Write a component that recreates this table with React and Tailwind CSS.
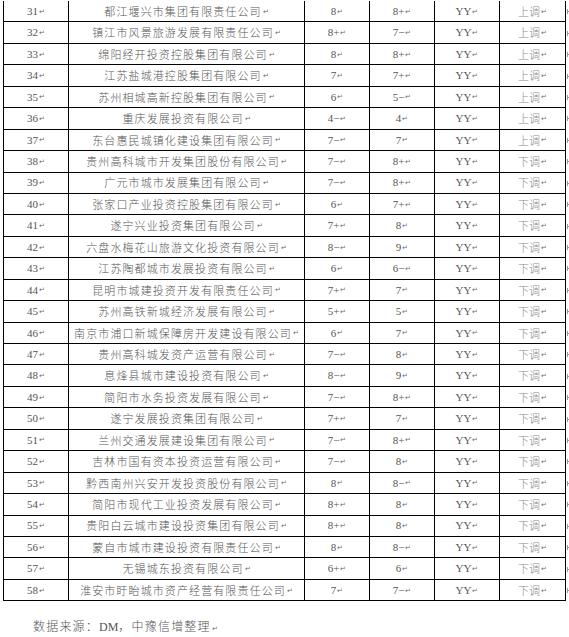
import React from "react";

const rows = [
  ["31", "都江堰兴市集团有限责任公司", "8", "8+", "上调"],
  ["32", "镇江市风景旅游发展有限责任公司", "8+", "7−", "上调"],
  ["33", "绵阳经开投资控股集团有限公司", "8", "8+", "上调"],
  ["34", "江苏盐城港控股集团有限公司", "7", "7+", "上调"],
  ["35", "苏州相城高新控股集团有限公司", "6", "5−", "上调"],
  ["36", "重庆发展投资有限公司", "4−", "4", "上调"],
  ["37", "东台惠民城镇化建设集团有限公司", "7−", "7", "上调"],
  ["38", "贵州高科城市开发集团股份有限公司", "7−", "8+", "下调"],
  ["39", "广元市城市发展集团有限公司", "7−", "8+", "下调"],
  ["40", "张家口产业投资控股集团有限公司", "6", "7+", "下调"],
  ["41", "遂宁兴业投资集团有限公司", "7+", "8", "下调"],
  ["42", "六盘水梅花山旅游文化投资有限公司", "8−", "9", "下调"],
  ["43", "江苏陶都城市发展投资有限公司", "6", "6−", "下调"],
  ["44", "昆明市城建投资开发有限责任公司", "7+", "7", "下调"],
  ["45", "苏州高铁新城经济发展有限公司", "5+", "5", "下调"],
  ["46", "南京市浦口新城保障房开发建设有限公司", "6", "7", "下调"],
  ["47", "贵州高科城发资产运营有限公司", "7−", "8", "下调"],
  ["48", "息烽县城市建设投资有限公司", "8−", "9", "下调"],
  ["49", "简阳市水务投资发展有限公司", "7−", "8+", "下调"],
  ["50", "遂宁发展投资集团有限公司", "7+", "7", "下调"],
  ["51", "兰州交通发展建设集团有限公司", "7−", "8+", "下调"],
  ["52", "吉林市国有资本投资运营有限公司", "7−", "8", "下调"],
  ["53", "黔西南州兴安开发投资股份有限公司", "8", "8−", "下调"],
  ["54", "简阳市现代工业投资发展有限公司", "8+", "8", "下调"],
  ["55", "贵阳白云城市建设投资集团有限公司", "8+", "8", "下调"],
  ["56", "蒙自市城市建设投资有限责任公司", "8", "8−", "下调"],
  ["57", "无锡城东投资有限公司", "6+", "6", "下调"],
  ["58", "淮安市盱眙城市资产经营有限责任公司", "7", "7−", "下调"],
];

const serif = { fontFamily: '"Liberation Serif", "Noto Sans CJK SC", serif' };
const cjk = { fontFamily: '"Noto Sans CJK SC", "Noto Sans", sans-serif' };

function Mark() {
  return <span className="text-[7px] font-normal text-[#6b6b6b] ml-[1px] leading-none tracking-normal" style={cjk}>↵</span>;
}

function NumCell({ w, children }) {
  return (
    <div className={`${w} shrink-0 h-full border-r border-black flex items-center justify-center text-[11px] text-[#555] whitespace-nowrap`} style={serif}>
      <span>{children}</span>
      <Mark />
    </div>
  );
}

export default function App() {
  return (
    <div className="w-[569px] h-[637px] bg-white overflow-hidden">
      <div className="pt-[1px] pl-[3px]">
        {rows.map((r, i) => (
          <div key={i} className="flex items-center h-[21.45px]">
            <div className="flex h-full border-l border-b border-black">
              <NumCell w="w-[65px]">{r[0]}</NumCell>
              <div className="w-[236px] shrink-0 h-full border-r border-black flex items-center justify-center text-[11px] font-light tracking-[1.1px] text-[#555] whitespace-nowrap" style={cjk}>
                <span>{r[1]}</span>
                <Mark />
              </div>
              <NumCell w="w-[65px]">{r[2]}</NumCell>
              <NumCell w="w-[65px]">{r[3]}</NumCell>
              <NumCell w="w-[65px]">YY</NumCell>
              <div className="w-[66px] shrink-0 h-full border-r border-black flex items-center justify-center text-[11px] font-light text-[#8a8a8a] whitespace-nowrap" style={cjk}>
                <span>{r[4]}</span>
                <Mark />
              </div>
            </div>
            <div className="flex items-center ml-[1px]">
              <div className="w-[1px] h-[5px] bg-[#9a9a9a]" />
              <div className="w-[2px] h-[1px] bg-[#9a9a9a]" />
            </div>
          </div>
        ))}
      </div>
      <div className="mt-[17px] pl-[33px] text-[12px] font-light tracking-[1.2px] text-[#555] leading-[16px]" style={cjk}>
        数据来源：<span className="text-[12px] tracking-normal" style={serif}>DM</span>，中豫信增整理<Mark />
      </div>
    </div>
  );
}
